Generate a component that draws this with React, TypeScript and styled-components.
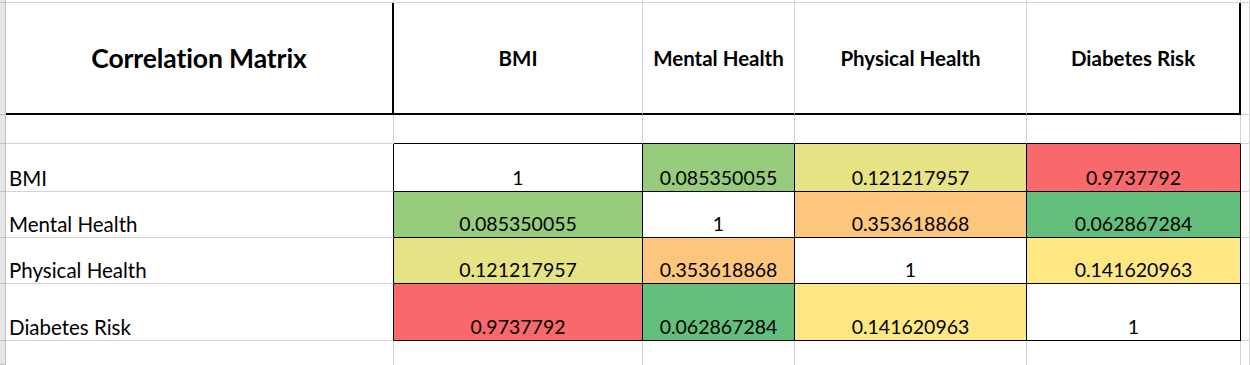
import React from 'react';
import styled, { createGlobalStyle } from 'styled-components';

const GlobalStyle = createGlobalStyle`
  html, body {
    margin: 0;
    padding: 0;
    background: #ffffff;
  }
  body {
    font-family: Lato, 'Liberation Sans', sans-serif;
    color: #000000;
  }
`;

type Edge = 'none' | 'grid' | 'black' | 'thick';

const edge = (e: Edge) => {
  switch (e) {
    case 'grid':
      return '1px solid #d4d4d4';
    case 'black':
      return '1px solid #000000';
    case 'thick':
      return '2px solid #000000';
    default:
      return 'none';
  }
};

const Sheet = styled.div`
  display: grid;
  grid-template-columns: 6px 388px 249px 152px 232px 214px 1fr;
  grid-template-rows: 3px 112px 29px 48px 46px 46px 57px 1fr;
  width: 1250px;
  height: 365px;
  overflow: hidden;
`;

const Cell = styled.div<{ $right?: Edge; $bottom?: Edge; $bg?: string }>`
  box-sizing: border-box;
  min-width: 0;
  overflow: hidden;
  white-space: nowrap;
  background: ${(p) => p.$bg || '#ffffff'};
  border-right: ${(p) => edge(p.$right || 'grid')};
  border-bottom: ${(p) => edge(p.$bottom || 'grid')};
`;

const RowHead = styled(Cell)`
  background: #e6e6e6;
  border-right: 1px solid #c4c4c4;
  border-bottom: 1px solid #bdbdbd;
`;

const Title = styled(Cell)<{ $big?: boolean }>`
  display: flex;
  align-items: center;
  justify-content: center;
  font-weight: 700;
  font-size: ${(p) => (p.$big ? '26.5px' : '20.5px')};
  letter-spacing: ${(p) => (p.$big ? '-0.1px' : '0')};
`;

const Value = styled(Cell)<{ $left?: boolean }>`
  display: flex;
  align-items: flex-end;
  justify-content: ${(p) => (p.$left ? 'flex-start' : 'center')};
  padding: 0 0 1px ${(p) => (p.$left ? '3px' : '0')};
  font-size: ${(p) => (p.$left ? '20.5px' : '19.5px')};
  line-height: 24px;
`;

const labels = ['BMI', 'Mental Health', 'Physical Health', 'Diabetes Risk'];

const matrix = [
  ['1', '0.085350055', '0.121217957', '0.9737792'],
  ['0.085350055', '1', '0.353618868', '0.062867284'],
  ['0.121217957', '0.353618868', '1', '0.141620963'],
  ['0.9737792', '0.062867284', '0.141620963', '1'],
];

// colour scale fills as they show in the sheet
const shade: Record<string, string> = {
  '0.085350055': '#97cc7d',
  '0.121217957': '#e5e383',
  '0.9737792': '#f8696b',
  '0.353618868': '#fdc67d',
  '0.062867284': '#63be7b',
  '0.141620963': '#ffe884',
};

export default function App() {
  return (
    <>
      <GlobalStyle />
      <Sheet>
        {/* row above the header */}
        <RowHead />
        <Cell />
        <Cell />
        <Cell />
        <Cell />
        <Cell />
        <Cell />

        {/* header */}
        <RowHead />
        <Title $big $right="thick" $bottom="thick">
          Correlation Matrix
        </Title>
        {labels.map((l, i) => (
          <Title key={l} $right={i === 3 ? 'thick' : 'grid'} $bottom="thick">
            {l}
          </Title>
        ))}
        <Cell />

        {/* spacer row */}
        <RowHead />
        <Cell />
        {labels.map((l) => (
          <Cell key={l} $bottom="black" />
        ))}
        <Cell />

        {matrix.map((row, r) => (
          <React.Fragment key={labels[r]}>
            <RowHead />
            <Value $left $right="black">
              {labels[r]}
            </Value>
            {row.map((v, c) => (
              <Value key={c} $right="black" $bottom="black" $bg={shade[v]}>
                {v}
              </Value>
            ))}
            <Cell />
          </React.Fragment>
        ))}

        {/* row below */}
        <RowHead />
        <Cell $bottom="none" />
        <Cell $bottom="none" />
        <Cell $bottom="none" />
        <Cell $bottom="none" />
        <Cell $bottom="none" />
        <Cell $bottom="none" />
      </Sheet>
    </>
  );
}
